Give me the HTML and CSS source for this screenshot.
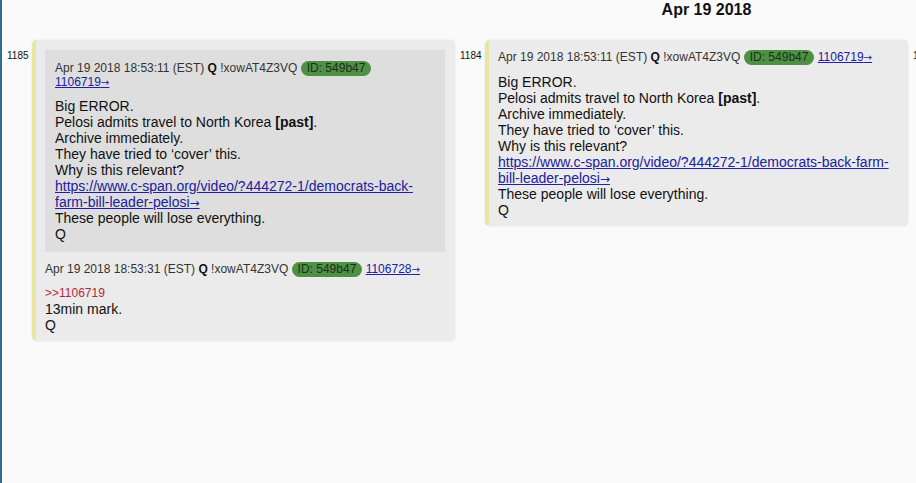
FILE: index.html
```html
<!DOCTYPE html>
<html>
<head>
<meta charset="utf-8">
<link rel="stylesheet" href="styles.css">
</head>
<body>
<div class="timeline">
  <div class="col">
    <div class="date"></div>
    <div class="entry">
      <div class="num">1185</div>
      <div class="card">
        <div class="quote">
          <div class="meta">Apr 19 2018 18:53:11 (EST) <b>Q</b> !xowAT4Z3VQ <span class="uid">ID: 549b47</span> <a href="#">1106719<span class="arr">→</span></a></div>
          <div class="text">Big ERROR.<br>Pelosi admits travel to North Korea <b>[past]</b>.<br>Archive immediately.<br>They have tried to ‘cover’ this.<br>Why is this relevant?<br><a href="#">https://www.c-span.org/video/?444272-1/democrats-back-farm-bill-leader-pelosi<span class="arr">→</span></a><br>These people will lose everything.<br>Q</div>
        </div>
        <div class="meta">Apr 19 2018 18:53:31 (EST) <b>Q</b> !xowAT4Z3VQ <span class="uid">ID: 549b47</span> <a href="#">1106728<span class="arr">→</span></a></div>
        <div class="text reply"><span class="ref">&gt;&gt;1106719</span><br>13min mark.<br>Q</div>
      </div>
    </div>
  </div>
  <div class="col">
    <div class="date"><h2>Apr 19 2018</h2></div>
    <div class="entry">
      <div class="num">1184</div>
      <div class="card">
        <div class="meta">Apr 19 2018 18:53:11 (EST) <b>Q</b> !xowAT4Z3VQ <span class="uid">ID: 549b47</span> <a href="#">1106719<span class="arr">→</span></a></div>
        <div class="text">Big ERROR.<br>Pelosi admits travel to North Korea <b>[past]</b>.<br>Archive immediately.<br>They have tried to ‘cover’ this.<br>Why is this relevant?<br><a href="#">https://www.c-span.org/video/?444272-1/democrats-back-farm-bill-leader-pelosi<span class="arr">→</span></a><br>These people will lose everything.<br>Q</div>
      </div>
    </div>
  </div>
  <div class="col">
    <div class="date"></div>
    <div class="entry">
      <div class="num">1183</div>
      <div class="card">
        <div class="meta">Apr 19 2018 18:50:00 (EST) <b>Q</b> !xowAT4Z3VQ</div>
      </div>
    </div>
  </div>
</div>
</body>
</html>
```
FILE: styles.css
```css
html, body {
  margin: 0;
  padding: 0;
  overflow: hidden;
  height: 100%;
}
body {
  background: #fafafa;
  border-left: 2px solid #2e6e8e;
  font-family: "Liberation Sans", Arial, sans-serif;
  color: #111;
  box-sizing: border-box;
}
.timeline {
  display: flex;
  align-items: flex-start;
  width: max-content;
}
.col {
  width: 453px;
  flex: none;
}
.date {
  height: 40px;
}
.date h2 {
  margin: 0;
  font-size: 16px;
  line-height: 19px;
  font-weight: bold;
  color: #111;
  text-align: center;
  padding-left: 50px;
}
.entry {
  display: flex;
  align-items: flex-start;
  padding-left: 5px;
}
.num {
  width: 25px;
  flex: none;
  font-size: 10px;
  line-height: 12px;
  padding-top: 10px;
  color: #111;
}
.card {
  width: 423px;
  box-sizing: border-box;
  background: #ebebeb;
  border-left: 4px solid #e8e6a2;
  border-radius: 5px;
  box-shadow: 0 0 2px rgba(0,0,0,0.12);
  padding: 10px 10px 8px 9px;
}
.quote {
  background: #dedede;
  padding: 11px 10px 10px 10px;
  margin-bottom: 10px;
}
.quote .meta {
  padding-right: 14px;
}
.meta {
  font-size: 12px;
  line-height: 13px;
  color: #333;
}
.meta b {
  color: #111;
}
.uid {
  display: inline-block;
  background: #4e9145;
  color: #1d2f1a;
  border-radius: 8px;
  padding: 1px 6px;
  line-height: 13px;
}
a {
  color: #2020a0;
  text-decoration: underline;
}
.arr {
  font-family: "DejaVu Sans", sans-serif;
  font-size: 0.85em;
  line-height: 1;
}
.text {
  margin-top: 9px;
  font-size: 14px;
  line-height: 16px;
  color: #111;
}
.text.reply {
  margin-top: 7px;
}
.ref {
  font-size: 12px;
  color: #b02a3a;
}
```
